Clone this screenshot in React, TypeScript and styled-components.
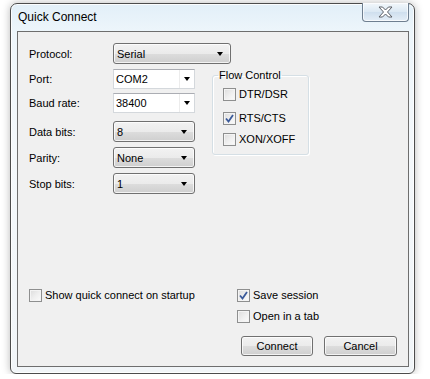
import React from 'react';
import styled, { createGlobalStyle } from 'styled-components';

const GlobalStyle = createGlobalStyle`
  html, body {
    margin: 0;
    background: #ffffff;
  }
  body {
    font-family: "Liberation Sans", Arial, sans-serif;
    font-size: 11px;
    color: #000;
  }
`;

const Page = styled.div`
  padding: 3px 0 0 10px;
`;

const Window = styled.div`
  width: 405px;
  height: 371px;
  box-sizing: border-box;
  border: 1px solid #4c4c4c;
  border-radius: 7px 7px 6px 6px;
  background: linear-gradient(180deg, #e2eff8 0%, #eef6fb 8%, #f4f8fb 40%, #f1f5f8 100%);
  box-shadow: 0 0 8px rgba(0, 0, 0, 0.28), inset 0 0 0 1px rgba(255, 255, 255, 0.85);
  display: flex;
  flex-direction: column;
  padding: 0 5px 6px 6px;
`;

const TitleBar = styled.div`
  height: 27px;
  display: flex;
  align-items: flex-start;
`;

const TitleText = styled.div`
  font-size: 12px;
  line-height: 16px;
  padding: 5px 0 0 1px;
  color: #000;
`;

const CloseButton = styled.div`
  margin-left: auto;
  margin-top: -1px;
  width: 47px;
  height: 19px;
  box-sizing: border-box;
  border: 1px solid #6f7f90;
  border-top: none;
  border-radius: 0 0 4px 4px;
  background: linear-gradient(180deg, #f2f7fb 0%, #dbe8f3 50%, #cfdfee 51%, #e4eef7 100%);
  box-shadow: inset 0 0 0 1px rgba(255, 255, 255, 0.7);
  display: flex;
  align-items: center;
  justify-content: center;
`;

const Client = styled.div`
  flex: 1;
  box-sizing: border-box;
  border: 1px solid #6e6e6e;
  background: #f0f0f0;
  padding: 11px 11px 10px 11px;
  display: flex;
  flex-direction: column;
`;

const FieldRow = styled.div<{ $top?: number }>`
  display: grid;
  grid-template-columns: 84px auto;
  align-items: center;
  margin-top: ${p => p.$top ?? 0}px;
`;

const FieldLabel = styled.span`
  line-height: 14px;
`;

const SettingsRow = styled.div`
  display: flex;
  align-items: flex-start;
  margin-top: 5px;
`;

const FieldColumn = styled.div`
  display: flex;
  flex-direction: column;
`;

const DropCombo = styled.div<{ $width: number }>`
  width: ${p => p.$width}px;
  height: 21px;
  box-sizing: border-box;
  border: 1px solid #707070;
  border-radius: 3px;
  background: linear-gradient(180deg, #f2f2f2 0%, #ebebeb 50%, #dddddd 51%, #cfcfcf 100%);
  box-shadow: inset 0 0 0 1px rgba(255, 255, 255, 0.75);
  display: flex;
  align-items: center;
  padding: 0 7px 0 3px;
`;

const EditCombo = styled.div`
  width: 82px;
  height: 20px;
  box-sizing: border-box;
  border: 1px solid #d4d8dc;
  border-top-color: #abadb3;
  background: #ffffff;
  display: flex;
  align-items: center;
  padding-left: 2px;
`;

const ComboText = styled.span`
  flex: 1;
  line-height: 14px;
`;

const EditButton = styled.div`
  width: 14px;
  height: 100%;
  border-left: 1px solid #ececec;
  display: flex;
  align-items: center;
  justify-content: center;
`;

const Arrow = styled.span`
  width: 0;
  height: 0;
  border-left: 3.5px solid transparent;
  border-right: 3.5px solid transparent;
  border-top: 4px solid #000;
`;

const GroupBox = styled.fieldset`
  width: 97px;
  box-sizing: border-box;
  margin: -1px 0 0 17px;
  padding: 0 6px 7px 10px;
  border: 1px solid #d5dfe5;
  border-radius: 3px;
  box-shadow: inset 1px 1px 0 #ffffff, 1px 1px 0 #ffffff;
`;

const GroupLegend = styled.legend`
  padding: 0 1px;
  margin-left: -5px;
  line-height: 14px;
`;

const CheckRow = styled.label<{ $top?: number }>`
  display: flex;
  align-items: center;
  gap: 3px;
  height: 16px;
  margin-top: ${p => p.$top ?? 0}px;
  white-space: nowrap;
`;

const CheckBox = styled.span`
  width: 13px;
  height: 13px;
  box-sizing: border-box;
  border: 1px solid #8e8f8f;
  background: linear-gradient(135deg, #dcdcdc 0%, #f0f0f0 55%, #fbfbfb 100%);
  box-shadow: inset 0 0 0 1px #f4f4f4;
  display: flex;
  align-items: center;
  justify-content: center;
  flex-shrink: 0;
`;

const BottomRow = styled.div`
  margin-top: auto;
  display: flex;
  align-items: flex-start;
`;

const StartupSide = styled.div`
  flex: 1;
`;

const ActionSide = styled.div`
  width: 160px;
  display: flex;
  flex-direction: column;
`;

const ButtonRow = styled.div`
  display: flex;
  gap: 11px;
  margin: 12px 0 0 4px;
`;

const PushButton = styled.button<{ $width: number }>`
  width: ${p => p.$width}px;
  height: 20px;
  box-sizing: border-box;
  border: 1px solid #707070;
  border-radius: 3px;
  background: linear-gradient(180deg, #f2f2f2 0%, #ebebeb 50%, #dddddd 51%, #cfcfcf 100%);
  box-shadow: inset 0 0 0 1px rgba(255, 255, 255, 0.75);
  font-family: inherit;
  font-size: 11px;
  color: #000;
  padding: 0;
`;

const CloseGlyph = () => (
  <svg width="15" height="12" viewBox="0 0 15 12">
    <polygon
      points="1,1 4.5,1 7.5,4 10.5,1 14,1 9.5,6 14,11 10.5,11 7.5,8 4.5,11 1,11 5.5,6"
      fill="#ffffff"
      stroke="#5b5f66"
      strokeWidth="1"
      strokeLinejoin="round"
    />
  </svg>
);

const Tick = () => (
  <svg width="9" height="9" viewBox="0 0 9 9">
    <path d="M1 4.5 L3.5 7.5 L8 1" fill="none" stroke="#3b5a9a" strokeWidth="1.8" />
  </svg>
);

const Check: React.FC<{ label: string; checked?: boolean; top?: number }> = ({ label, checked, top }) => (
  <CheckRow $top={top}>
    <CheckBox>{checked && <Tick />}</CheckBox>
    <span>{label}</span>
  </CheckRow>
);

const App: React.FC = () => {
  return (
    <Page>
      <GlobalStyle />
      <Window>
        <TitleBar>
          <TitleText>Quick Connect</TitleText>
          <CloseButton>
            <CloseGlyph />
          </CloseButton>
        </TitleBar>
        <Client>
          <FieldRow>
            <FieldLabel>Protocol:</FieldLabel>
            <DropCombo $width={118}>
              <ComboText>Serial</ComboText>
              <Arrow />
            </DropCombo>
          </FieldRow>

          <SettingsRow>
            <FieldColumn>
              <FieldRow>
                <FieldLabel>Port:</FieldLabel>
                <EditCombo>
                  <ComboText>COM2</ComboText>
                  <EditButton><Arrow /></EditButton>
                </EditCombo>
              </FieldRow>
              <FieldRow $top={4}>
                <FieldLabel>Baud rate:</FieldLabel>
                <EditCombo>
                  <ComboText>38400</ComboText>
                  <EditButton><Arrow /></EditButton>
                </EditCombo>
              </FieldRow>
              <FieldRow $top={8}>
                <FieldLabel>Data bits:</FieldLabel>
                <DropCombo $width={82}>
                  <ComboText>8</ComboText>
                  <Arrow />
                </DropCombo>
              </FieldRow>
              <FieldRow $top={5}>
                <FieldLabel>Parity:</FieldLabel>
                <DropCombo $width={82}>
                  <ComboText>None</ComboText>
                  <Arrow />
                </DropCombo>
              </FieldRow>
              <FieldRow $top={5}>
                <FieldLabel>Stop bits:</FieldLabel>
                <DropCombo $width={82}>
                  <ComboText>1</ComboText>
                  <Arrow />
                </DropCombo>
              </FieldRow>
            </FieldColumn>

            <GroupBox>
              <GroupLegend>Flow Control</GroupLegend>
              <Check label="DTR/DSR" top={4} />
              <Check label="RTS/CTS" checked top={8} />
              <Check label="XON/XOFF" top={5} />
            </GroupBox>
          </SettingsRow>

          <BottomRow>
            <StartupSide>
              <Check label="Show quick connect on startup" />
            </StartupSide>
            <ActionSide>
              <Check label="Save session" checked />
              <Check label="Open in a tab" top={5} />
              <ButtonRow>
                <PushButton $width={72}>Connect</PushButton>
                <PushButton $width={73}>Cancel</PushButton>
              </ButtonRow>
            </ActionSide>
          </BottomRow>
        </Client>
      </Window>
    </Page>
  );
};

export default App;
